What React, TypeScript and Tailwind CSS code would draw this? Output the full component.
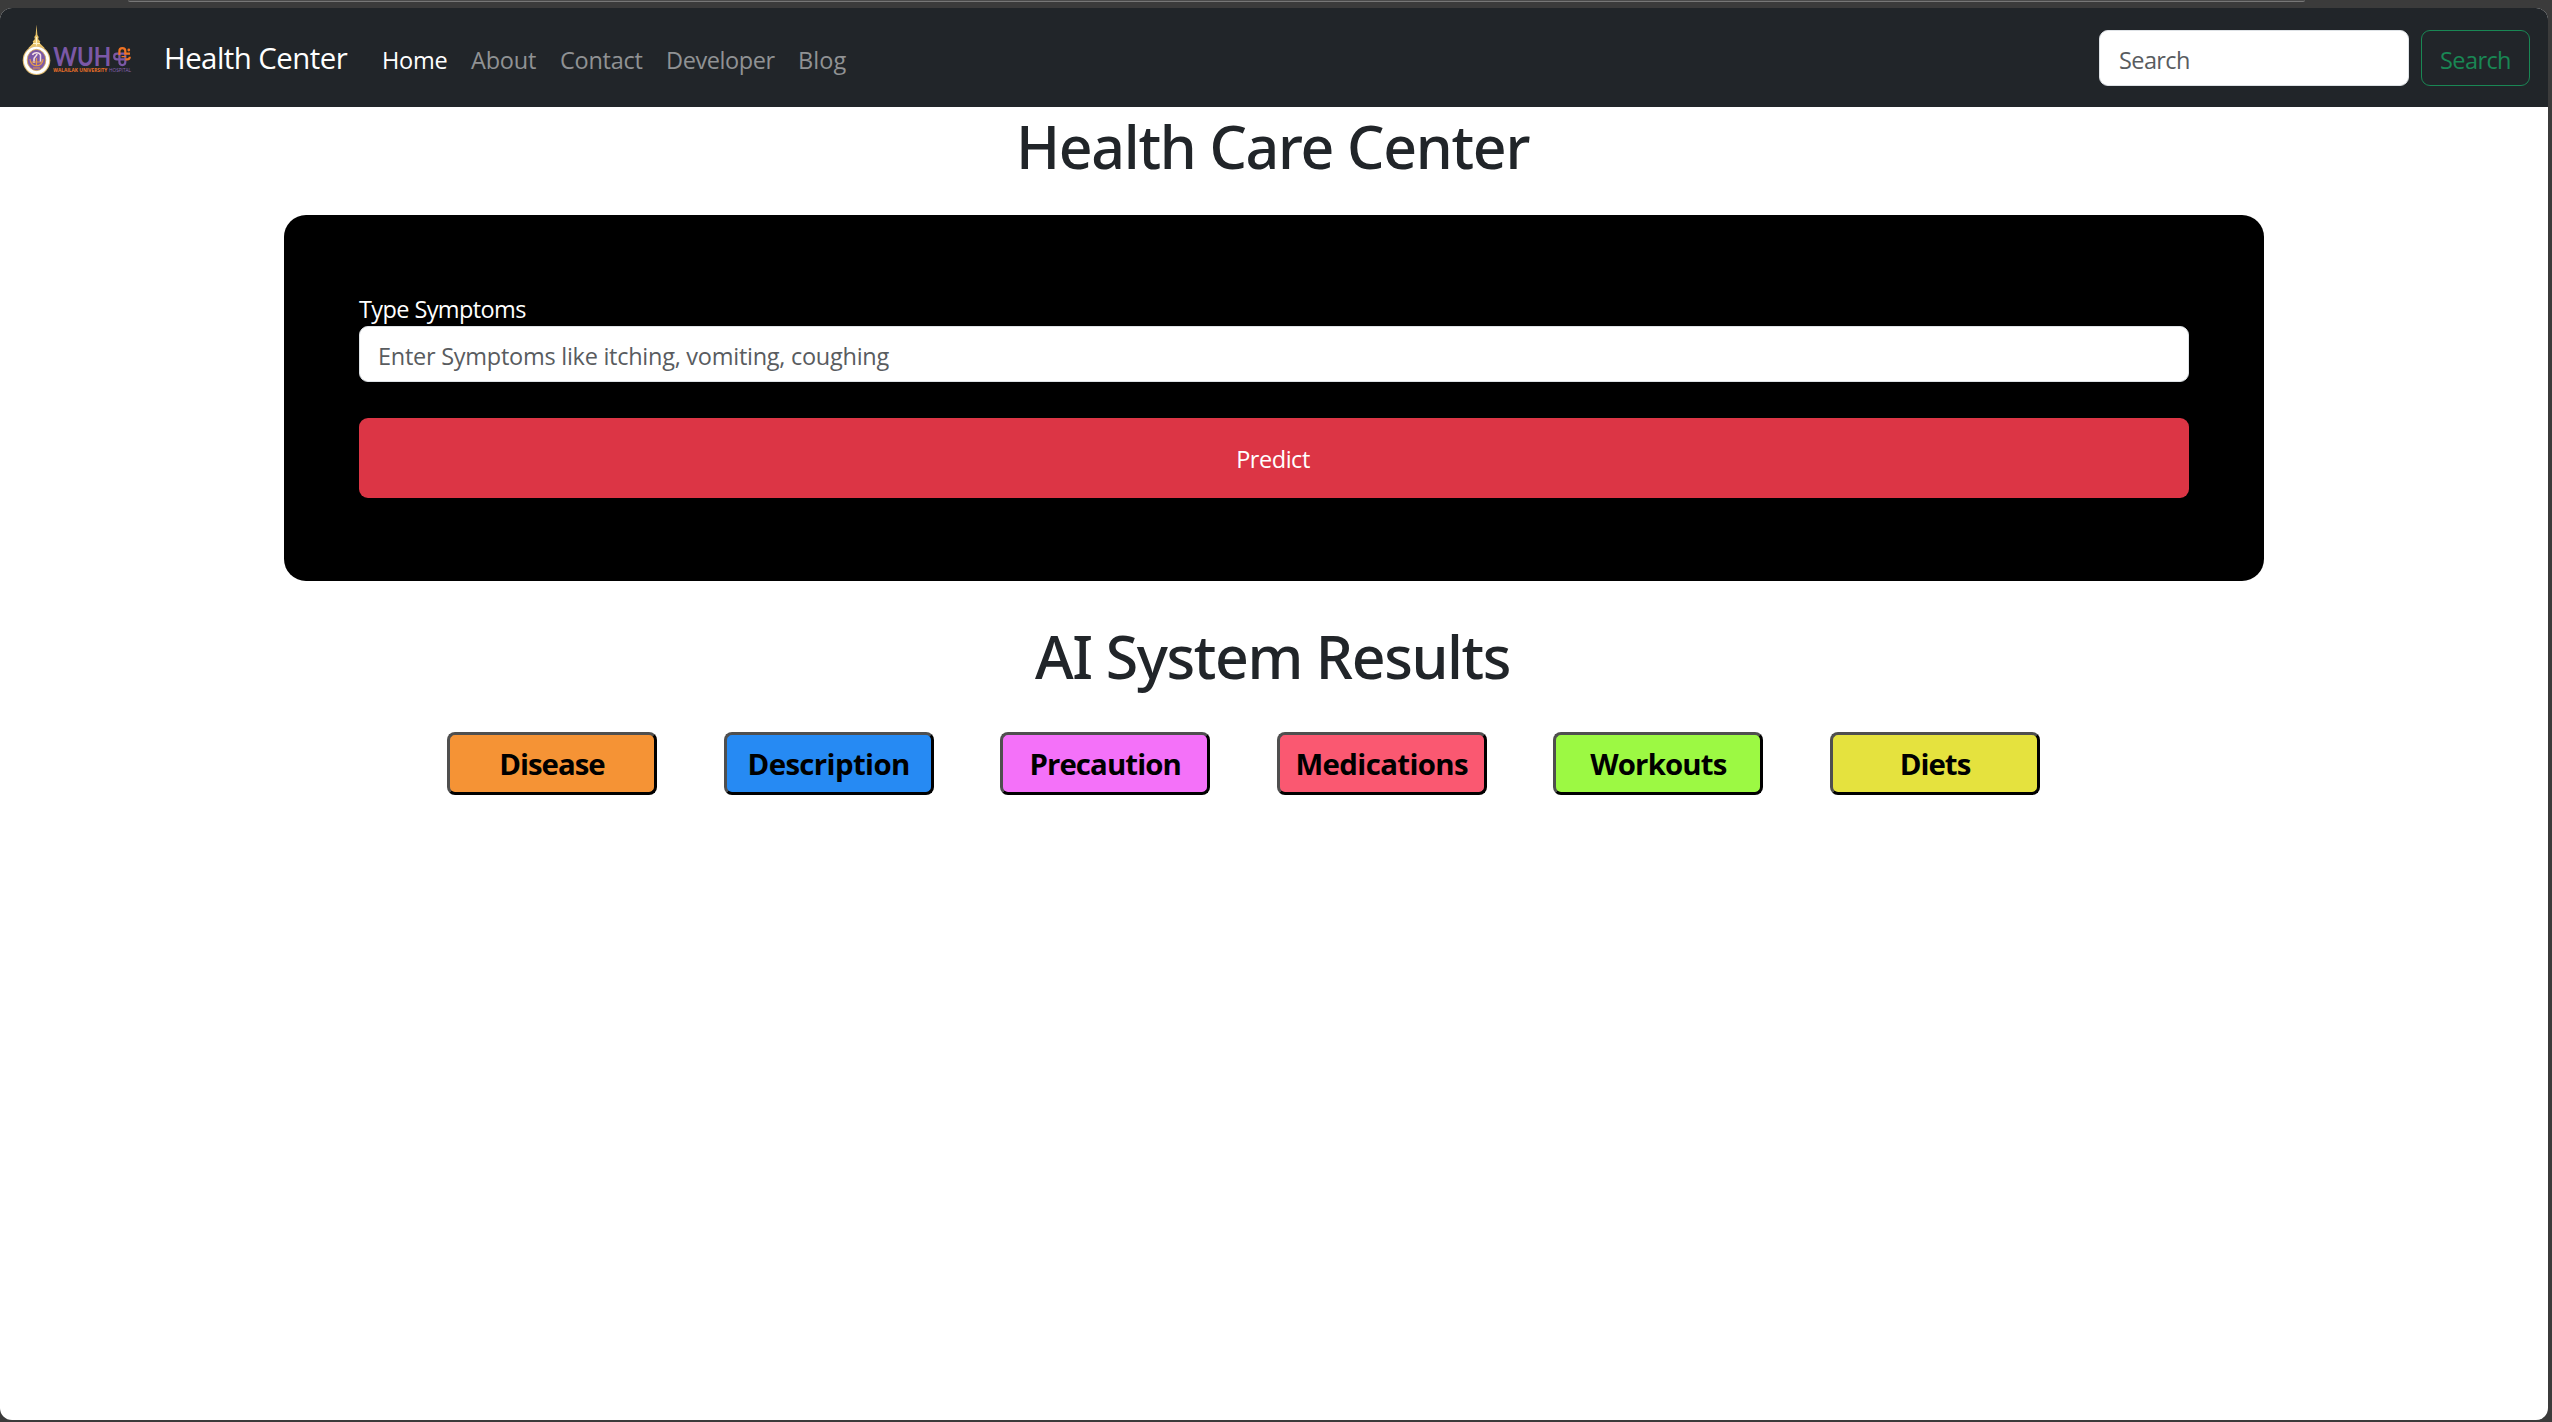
const results = [
  { label: "Disease", style: "bg-[#f59335] tracking-[-1px]" },
  { label: "Description", style: "bg-[#268af3] tracking-[-0.62px]" },
  { label: "Precaution", style: "bg-[#f471f9] tracking-[-0.9px]" },
  { label: "Medications", style: "bg-[#fa5871] tracking-[-0.62px]" },
  { label: "Workouts", style: "bg-[#9cf943] tracking-[-0.84px]" },
  { label: "Diets", style: "bg-[#e5e23e] tracking-[-0.96px]" },
];

const links = [
  { label: "Home", style: "w-[89px] text-white tracking-[-0.24px]" },
  { label: "About", style: "w-[89px] text-[#909294] tracking-[-0.2px]" },
  { label: "Contact", style: "w-[106px] text-[#909294] tracking-[-0.26px]" },
  { label: "Developer", style: "w-[132px] text-[#909294] tracking-[-0.41px]" },
  { label: "Blog", style: "w-[72px] text-[#909294] tracking-[0.1px]" },
];

function Logo() {
  return (
    <svg viewBox="18 20 120 60" className="mb-4 h-[60px] w-[120px] shrink-0" fill="none">
      {/* Spire */}
      <path d="M36.5 24.5L37.4 35l1.3 2-.6 2 2.2 2.4-.7 1.6 5 5H28.4l5-5-.7-1.6 2.2-2.4-.6-2 1.3-2z" fill="#e9c368" />
      <path d="M36.5 37v10M33 43.5h7" stroke="#fff3c9" strokeWidth="1.2" />
      {/* Seal */}
      <ellipse cx="36.5" cy="60.3" rx="13.8" ry="14.7" fill="#e2bd73" />
      <ellipse cx="36.5" cy="60.3" rx="12.7" ry="13.6" fill="#fff" />
      <ellipse cx="36.5" cy="60" rx="9.3" ry="10.6" fill="#7d58a5" stroke="#d8a84d" strokeWidth="0.8" />
      <path d="M32.5 55c1-3 7-3 8 0v7M34 63v-4c0-2 3-3 3-5" stroke="#f3dfe4" strokeWidth="1.5" />
      <path d="M30 59c0 9 13 9 13 0M36.5 58v8M31.5 62h10M33 68h7" stroke="#e39a4b" strokeWidth="1.2" />
      {/* Word mark */}
      <text x="53.3" y="65.8" textLength="58" lengthAdjust="spacingAndGlyphs" fontFamily="Lato, sans-serif" fontWeight="700" fontSize="26" fill="#7b58a6">WUH</text>
      {/* Looped cross */}
      <path d="M125.3 53.7H117a2.85 2.85 0 0 0 0 5.7h8.3" stroke="#7b58a6" strokeWidth="2.2" />
      <path d="M119.4 53.7v8.4a2.95 2.95 0 0 0 5.9 0v-8.4" stroke="#7b58a6" strokeWidth="2.2" />
      <path d="M119.4 55v-4a2.95 2.95 0 0 1 5.9 0v2.7H130M125.3 59.4h1.9a2.6 2.6 0 0 0 2.6-2.6" stroke="#f07223" strokeWidth="2.2" />
      <path d="M121.5 56.6h4.5" stroke="#f07223" strokeWidth="1.2" />
      <circle cx="128.8" cy="50" r="1.4" fill="#f07223" />
      <text x="53.3" y="71.8" textLength="54" lengthAdjust="spacingAndGlyphs" fontFamily="Open Sans, sans-serif" fontWeight="700" fontSize="5.2" fill="#ee7328">WALAILAK UNIVERSITY</text>
      <text x="109" y="71.8" textLength="22" lengthAdjust="spacingAndGlyphs" fontFamily="Open Sans, sans-serif" fontSize="5.2" fill="#8a65b8">HOSPITAL</text>
    </svg>
  );
}

export default function App() {
  return (
    <div className="flex h-[1422px] w-[2552px] flex-col overflow-hidden bg-[#3b3b3b] font-['Open_Sans',sans-serif] text-[23.5px] leading-9">
      <div className="h-2 shrink-0 pl-32">
        <div className="h-[2px] w-[2177px] rounded-b-[6px] border-b border-[#777] bg-[#4a4a4a]" />
      </div>
      <div className="flex h-[1412px] w-[2548px] flex-col overflow-hidden rounded-[12px] bg-white">
        <nav className="flex h-[99px] shrink-0 items-center bg-[#212529] px-[18px] pt-px">
          <Logo />
          <a className="ml-[26px] h-[45px] w-[206px] text-[29.4px] leading-[45px] tracking-[-0.53px] whitespace-nowrap text-white">
            Health Center
          </a>
          <div className="flex pt-[3px]">
            {links.map((link) => (
              <a key={link.label} className={`pl-3 ${link.style}`}>
                {link.label}
              </a>
            ))}
          </div>
          <form className="ml-auto flex gap-3">
            <input
              placeholder="Search"
              className="h-14 w-[310px] rounded-[9px] border border-[#dee2e6] bg-white px-[19px] pt-[3px] tracking-[-0.6px] placeholder:text-[#595c5f]"
            />
            <button
              type="button"
              className="h-14 w-[109px] rounded-[9px] border border-[#198754] pt-[3px] tracking-[-0.6px] text-[#198754]"
            >
              Search
            </button>
          </form>
        </nav>

        <h1 className="h-[72px] shrink-0 pr-[3px] text-center font-['Noto_Sans',sans-serif] text-[59px] leading-[78px] font-medium tracking-[-1.3px] text-[#212529]">
          Health Care Center
        </h1>

        <section className="mx-auto mt-9 flex h-[366px] w-[1980px] shrink-0 flex-col rounded-[22px] bg-black px-[75px] pt-[75px]">
          <label className="h-9 leading-[38px] tracking-[-0.6px] text-white">Type Symptoms</label>
          <input
            placeholder="Enter Symptoms like itching, vomiting, coughing"
            className="h-14 w-full rounded-[9px] border border-[#dee2e6] bg-white px-[18px] pt-[3px] tracking-[-0.26px] placeholder:text-[#595c5f]"
          />
          <button className="mt-9 h-20 w-full rounded-[9px] bg-[#dc3545] pt-[2px] pr-[2px] tracking-[-0.47px] text-white">
            Predict
          </button>
        </section>

        <h1 className="mt-9 h-[72px] shrink-0 pr-[3px] text-center font-['Noto_Sans',sans-serif] text-[59px] leading-[78px] font-medium tracking-[-1.4px] text-[#212529]">
          AI System Results
        </h1>

        <div className="mt-[43px] ml-[447px] flex gap-[66.6px]">
          {results.map((item) => (
            <button
              key={item.label}
              className={`h-[63px] w-[210px] shrink-0 rounded-[8px] border-[3px] border-t-[#4f4f4f] border-r-black border-b-black border-l-[#4f4f4f] text-[29.4px] leading-[58px] font-bold text-black ${item.style}`}
            >
              {item.label}
            </button>
          ))}
        </div>
      </div>
    </div>
  );
}
